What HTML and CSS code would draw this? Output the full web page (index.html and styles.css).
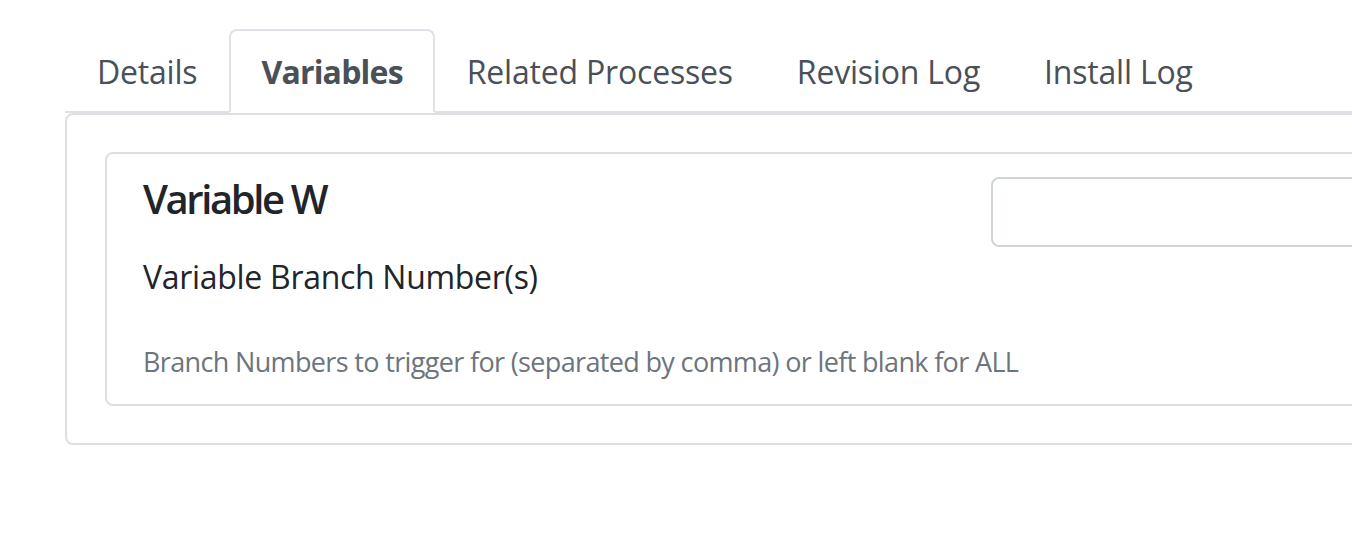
FILE: index.html
```html
<!DOCTYPE html>
<html lang="en">
<head>
<meta charset="utf-8">
<title>Variables</title>
<link rel="stylesheet" href="styles.css">
</head>
<body>
<div class="page">
  <ul class="tabs">
    <li class="tab">Details</li>
    <li class="tab active">Variables</li>
    <li class="tab">Related Processes</li>
    <li class="tab">Revision Log</li>
    <li class="tab">Install Log</li>
  </ul>
  <div class="panel">
    <div class="card">
      <div class="card-row">
        <div class="card-text">
          <h5 class="var-title">Variable W</h5>
          <div class="var-label">Variable Branch Number(s)</div>
          <div class="var-help">Branch Numbers to trigger for (separated by comma) or left blank for ALL</div>
        </div>
        <div class="card-input">
          <input class="text-input" type="text">
        </div>
      </div>
    </div>
  </div>
</div>
</body>
</html>
```
FILE: styles.css
```css
html, body {
  margin: 0;
  padding: 0;
  background: #ffffff;
  overflow: hidden;
}
body {
  font-family: "Open Sans", "Noto Sans", sans-serif;
  color: #212529;
}
.page {
  padding: 29px 0 0 65px;
  width: 1500px;
}
.tabs {
  display: flex;
  list-style: none;
  margin: 0;
  padding: 0;
  border-bottom: 2px solid #dee2e6;
}
.tab {
  padding: 17px 30px 15px;
  border: 2px solid transparent;
  border-radius: 8px 8px 0 0;
  margin-bottom: -2px;
  font-size: 32px;
  line-height: 48px;
  color: #495057;
  letter-spacing: -0.2px;
}
.tab.active {
  border-color: #dee2e6 #dee2e6 #ffffff;
  background: #ffffff;
  font-weight: 700;
  letter-spacing: -0.8px;
}
.tab.last {
  letter-spacing: 0;
}
.panel {
  border: 2px solid #dfdfdf;
  border-radius: 8px;
  padding: 37px 0 37px 38px;
}
.card {
  border: 2px solid #dfdfdf;
  border-radius: 8px;
  padding: 21px 0 21px 36px;
}
.card-row {
  display: flex;
}
.card-text {
  width: 848px;
  flex: none;
}
.card-input {
  flex: 1;
  padding-top: 2px;
}
.var-title {
  margin: 0;
  font-size: 40px;
  line-height: 48px;
  font-weight: 600;
  letter-spacing: -2.4px;
  color: #212529;
}
.var-label {
  margin-top: 30px;
  font-size: 32px;
  line-height: 48px;
  letter-spacing: -0.3px;
  color: #212529;
}
.var-help {
  margin-top: 40px;
  font-size: 27px;
  line-height: 42px;
  letter-spacing: -0.65px;
  white-space: nowrap;
  color: #6c757d;
}
.text-input {
  display: block;
  box-sizing: border-box;
  width: 100%;
  height: 70px;
  border: 2px solid #ced4da;
  border-radius: 8px;
  background: #ffffff;
  margin: 0;
  padding: 0 24px;
}
```
